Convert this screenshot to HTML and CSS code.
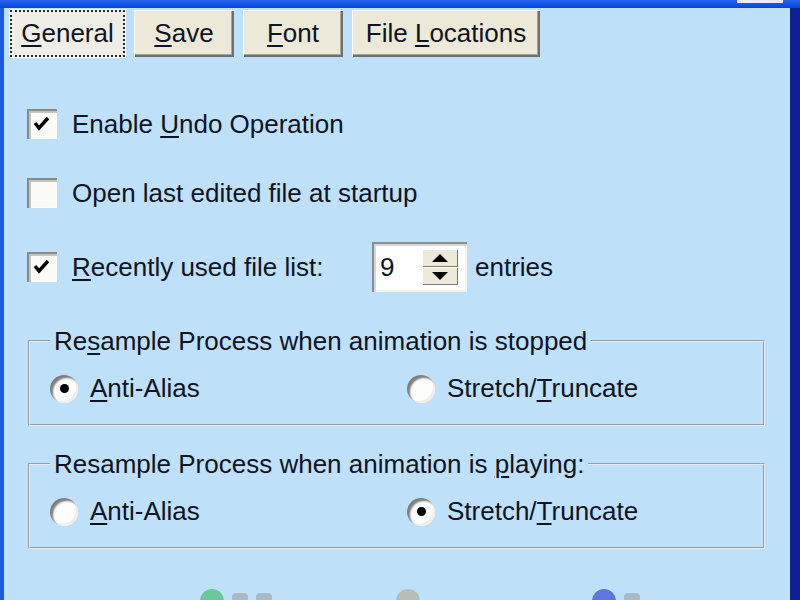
FILE: index.html
```html
<!DOCTYPE html>
<html lang="en">
<head>
  <meta charset="UTF-8">
  <title>Options</title>
  <link rel="stylesheet" href="styles.css">
</head>
<body>
  <div class="frame">
    <div class="titlebar"><span class="close-edge"></span></div>
    <div class="window">
      <div class="tabs">
        <button class="tab tab-active"><u>G</u>eneral</button>
        <button class="tab tab-save"><u>S</u>ave</button>
        <button class="tab tab-font"><u>F</u>ont</button>
        <button class="tab tab-files">File <u>L</u>ocations</button>
      </div>

      <div class="options">
        <div class="row">
          <span class="check">
            <svg viewBox="0 0 30 30" width="30" height="30"><polyline points="8,14 12,19 21,9" fill="none" stroke="#000" stroke-width="3.4"/></svg>
          </span>
          <span>Enable <u>U</u>ndo Operation</span>
        </div>
        <div class="row">
          <span class="check"></span>
          <span>Open last edited file at startup</span>
        </div>
        <div class="row row-spin">
          <span class="check">
            <svg viewBox="0 0 30 30" width="30" height="30"><polyline points="8,14 12,19 21,9" fill="none" stroke="#000" stroke-width="3.4"/></svg>
          </span>
          <span class="spin-label"><u>R</u>ecently used file list:</span>
          <div class="spin">
            <span class="spin-value">9</span>
            <div class="spin-buttons">
              <span class="spin-btn"><i class="arrow-up"></i></span>
              <span class="spin-btn"><i class="arrow-down"></i></span>
            </div>
          </div>
          <span class="spin-unit">entries</span>
        </div>
      </div>

      <fieldset class="group group-first">
        <legend>Re<u>s</u>ample Process when animation is stopped</legend>
        <div class="radios">
          <label class="radio-item"><span class="radio on"></span><span><u>A</u>nti-Alias</span></label>
          <label class="radio-item"><span class="radio"></span><span>Stretch/<u>T</u>runcate</span></label>
        </div>
      </fieldset>

      <fieldset class="group group-second">
        <legend>Resample Process when animation is <u>p</u>laying:</legend>
        <div class="radios">
          <label class="radio-item"><span class="radio"></span><span><u>A</u>nti-Alias</span></label>
          <label class="radio-item"><span class="radio on"></span><span>Stretch/<u>T</u>runcate</span></label>
        </div>
      </fieldset>

      <!-- bottom buttons, only their tops show -->
      <div class="footer">
        <span class="foot-btn"><span class="icon icon-ok"></span><span class="blob"></span><span class="blob"></span></span>
        <span class="foot-btn"><span class="icon icon-cancel"></span></span>
        <span class="foot-btn"><span class="icon icon-help"></span><span class="blob"></span></span>
      </div>
    </div>
  </div>
</body>
</html>
```

FILE: styles.css
```css
body {
  margin: 0;
  height: 600px;
  overflow: hidden;
  font-family: "Liberation Sans", Arial, sans-serif;
  font-size: 26px;
  color: #101322;
  background: #bfe0f9;
}

u {
  text-underline-offset: 3px;
  text-decoration-thickness: 2px;
}

.frame {
  height: 600px;
  display: flex;
  flex-direction: column;
}

.titlebar {
  height: 8px;
  flex: none;
  display: flex;
  justify-content: flex-end;
  align-items: flex-start;
  background: linear-gradient(#2566ee, #0a44d6);
}

.close-edge {
  width: 46px;
  height: 3px;
  margin-right: 17px;
  background: #e8eef8;
}

.window {
  flex: 1;
  display: flex;
  flex-direction: column;
  border-left: 4px solid #1d5ae4;
  border-right: 10px solid #0d1f92;
  background: #bfe0f9;
}

/* tab buttons */
.tabs {
  display: flex;
  gap: 9px;
  margin: 2px 0 0 6px;
}

.tab {
  height: 47px;
  padding: 0;
  border: none;
  font: inherit;
  color: #101322;
  background: #ece9d8;
  box-shadow: inset 1px 1px #ffffff, inset -2px -2px #6f6f6f, inset -3px -3px #a8a698;
}

.tab-active {
  width: 115px;
  background: #efeee6;
  box-shadow: 0 0 0 1px #ffffff;
  outline: 2px dotted #2a2a2a;
  outline-offset: -2px;
}

.tab-save,
.tab-font {
  width: 100px;
}

.tab-files {
  width: 188px;
}

/* checkbox rows */
.options {
  display: flex;
  flex-direction: column;
  gap: 29px;
  margin-top: 47px;
}

.row {
  display: flex;
  align-items: center;
  height: 40px;
  padding-left: 23px;
}

.row-spin {
  height: 50px;
}

.check {
  width: 30px;
  height: 30px;
  flex: none;
  margin-right: 15px;
  background: #fbfbf8;
  box-shadow: inset 2px 2px #8a8a8a, inset 4px 4px #c4c4c0, inset -1px -1px #ffffff;
}

.check svg {
  display: block;
}

.spin-label {
  width: 300px;
}

.spin {
  width: 95px;
  height: 50px;
  display: flex;
  align-items: center;
  background: #ffffff;
  box-shadow: inset 2px 2px #8c8c8c, inset 4px 4px #d8d8d2, inset -2px -2px #f4f4f0;
}

.spin-value {
  padding-left: 8px;
  flex: 1;
}

.spin-buttons {
  display: flex;
  flex-direction: column;
  width: 36px;
  height: 36px;
  margin-right: 9px;
}

.spin-btn {
  flex: 1;
  display: flex;
  align-items: center;
  justify-content: center;
  background: #ece9d8;
  box-shadow: inset 1px 1px #ffffff, inset -1px -1px #7a7a7a;
}

.arrow-up {
  border-left: 8px solid transparent;
  border-right: 8px solid transparent;
  border-bottom: 8px solid #000;
}

.arrow-down {
  border-left: 8px solid transparent;
  border-right: 8px solid transparent;
  border-top: 8px solid #000;
}

.spin-unit {
  margin-left: 8px;
}

/* group boxes */
.group {
  margin: 34px 25px 0 24px;
  padding: 17px 20px 21px 20px;
  border: 2px groove #e6eef4;
}

.group-second {
  margin-top: 23px;
}

.group legend {
  padding: 0 4px;
  line-height: 30px;
}

.radios {
  display: grid;
  grid-template-columns: 357px auto;
  height: 30px;
  align-items: center;
}

.radio-item {
  display: flex;
  align-items: center;
  gap: 12px;
}

.radio {
  width: 28px;
  height: 28px;
  flex: none;
  border-radius: 50%;
  display: flex;
  align-items: center;
  justify-content: center;
  background: #fdfdfb;
  box-shadow: inset 3px 3px 2px #7d7d7d, inset -2px -2px 1px #eeeeea;
}

.radio.on::after {
  content: "";
  width: 9px;
  height: 9px;
  border-radius: 50%;
  background: #000;
}

/* bottom buttons, mostly cut off */
.footer {
  display: flex;
  margin: 40px 0 0 196px;
}

.foot-btn {
  display: flex;
  align-items: flex-start;
  gap: 8px;
  width: 196px;
  height: 30px;
}

.icon {
  width: 24px;
  height: 24px;
  border-radius: 50%;
  background: #b5bdb5;
}

.icon-ok {
  background: #6cc79a;
}

.icon-help {
  background: #5a78dd;
}

.blob {
  width: 16px;
  height: 16px;
  margin-top: 4px;
  border-radius: 4px;
  background: #aab8c4;
}
```
